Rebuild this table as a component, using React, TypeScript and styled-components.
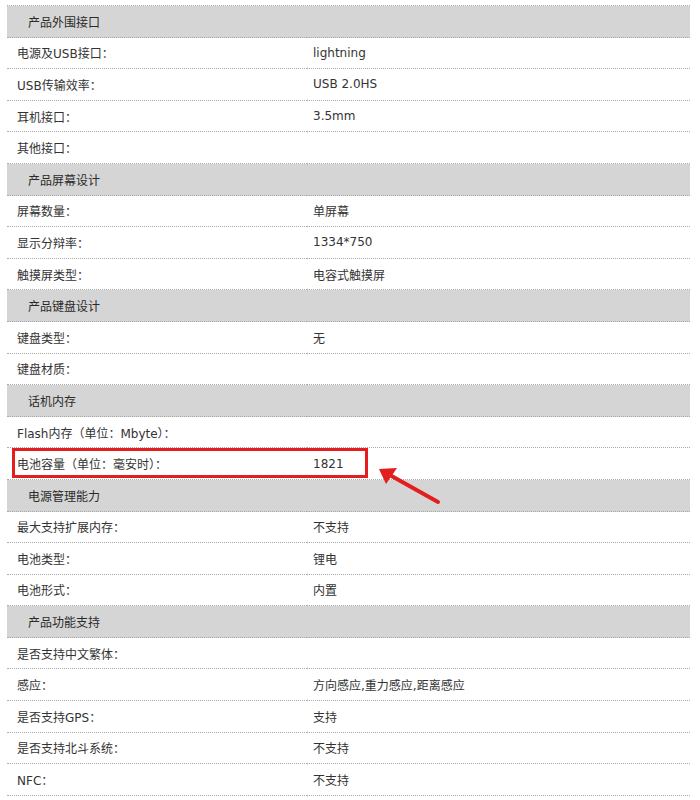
import styled, { createGlobalStyle } from "styled-components";

const GlobalStyle = createGlobalStyle`
  body {
    margin: 0;
    background: #fff;
    font-family: "DejaVu Sans", "Noto Sans CJK SC", sans-serif;
  }
`;

const Page = styled.div`
  position: relative;
  width: 700px;
  height: 800px;
  padding: 5px 10px 0 7px;
  box-sizing: border-box;
  overflow: hidden;
`;

const Table = styled.div`
  display: flex;
  flex-direction: column;
  border-top: 1px dotted #a9a9a9;
`;

const Row = styled.div<{ $section?: boolean }>`
  display: grid;
  grid-template-columns: 298px 385px;
  height: 31.6px;
  box-sizing: border-box;
  background: ${(p) => (p.$section ? "#d5d5d5" : "#fff")};
`;

const Cell = styled.div<{ $section?: boolean; $right?: boolean }>`
  display: flex;
  align-items: center;
  border-bottom: 1px dotted #a9a9a9;
  margin-left: ${(p) => (p.$right ? "1px" : "0")};
  padding-left: ${(p) => (p.$section ? "21px" : p.$right ? "7px" : "10px")};
  font-size: 12px;
  color: ${(p) => (p.$section ? "#2a2a2a" : "#333")};
  white-space: nowrap;
`;

const Highlight = styled.div`
  position: absolute;
  left: 12px;
  top: 448px;
  width: 356px;
  height: 30px;
  border: 3px solid #e41e1e;
  box-sizing: border-box;
`;

const Arrow = styled.svg`
  position: absolute;
  left: 370px;
  top: 455px;
`;

type Item = { label: string; value?: string; section?: boolean };

const rows: Item[] = [
  { label: "产品外围接口", section: true },
  { label: "电源及USB接口：", value: "lightning" },
  { label: "USB传输效率：", value: "USB 2.0HS" },
  { label: "耳机接口：", value: "3.5mm" },
  { label: "其他接口：" },
  { label: "产品屏幕设计", section: true },
  { label: "屏幕数量：", value: "单屏幕" },
  { label: "显示分辩率：", value: "1334*750" },
  { label: "触摸屏类型：", value: "电容式触摸屏" },
  { label: "产品键盘设计", section: true },
  { label: "键盘类型：", value: "无" },
  { label: "键盘材质：" },
  { label: "话机内存", section: true },
  { label: "Flash内存（单位：Mbyte）：" },
  { label: "电池容量（单位：毫安时）：", value: "1821" },
  { label: "电源管理能力", section: true },
  { label: "最大支持扩展内存：", value: "不支持" },
  { label: "电池类型：", value: "锂电" },
  { label: "电池形式：", value: "内置" },
  { label: "产品功能支持", section: true },
  { label: "是否支持中文繁体：" },
  { label: "感应：", value: "方向感应,重力感应,距离感应" },
  { label: "是否支持GPS：", value: "支持" },
  { label: "是否支持北斗系统：", value: "不支持" },
  { label: "NFC：", value: "不支持" },
];

const App = () => {
  return (
    <>
      <GlobalStyle />
      <Page>
        <Table>
          {rows.map((r, i) => (
            <Row key={i} $section={r.section}>
              <Cell $section={r.section}>{r.label}</Cell>
              <Cell $right>{r.value}</Cell>
            </Row>
          ))}
        </Table>
        <Highlight />
        <Arrow width="80" height="60" viewBox="0 0 80 60">
          {/* tip at (9,14) in page coords (379,469) */}
          <line x1="68" y1="47" x2="18" y2="19" stroke="#e41e1e" strokeWidth="4" strokeLinecap="round" />
          <polygon points="9,14 27,13 16,29" fill="#e41e1e" />
        </Arrow>
      </Page>
    </>
  );
};

export default App;
